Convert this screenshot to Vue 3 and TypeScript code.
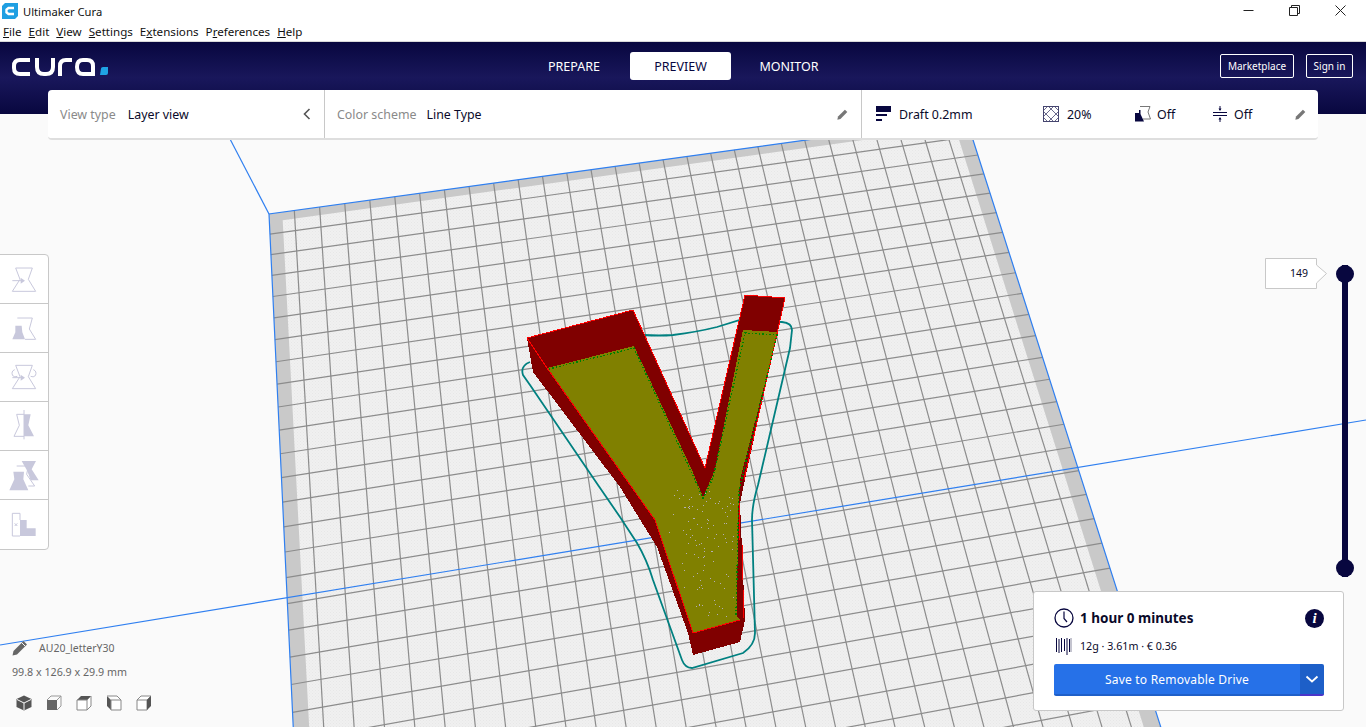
<template>
  <div class="app">
    <div class="titlebar">
      <svg class="app-icon" width="16" height="16" viewBox="0 0 16 16">
        <path d="M3 0H16V13L13 16H0V3Z" fill="#1f9fe2" />
        <path d="M12 5H6.500L4.500 6.500V9.500L6.500 11H12" fill="none" stroke="#fff" stroke-width="2.400" />
      </svg>
      <span class="title">Ultimaker Cura</span>
      <div class="win-controls">
        <svg width="11" height="11" viewBox="0 0 11 11"><path d="M0.500 5.500H10.500" stroke="#222" /></svg>
        <svg width="11" height="11" viewBox="0 0 11 11"><path d="M0.500 2.500H8.500V10.500H0.500ZM2.500 2.500V0.500H10.500V8.500H8.500" fill="none" stroke="#222" /></svg>
        <svg width="11" height="11" viewBox="0 0 11 11"><path d="M0.500 0.500L10.500 10.500M10.500 0.500L0.500 10.500" stroke="#222" /></svg>
      </div>
    </div>
    <div class="menubar">
      <span><u>F</u>ile</span>
      <span><u>E</u>dit</span>
      <span><u>V</u>iew</span>
      <span><u>S</u>ettings</span>
      <span>E<u>x</u>tensions</span>
      <span>P<u>r</u>eferences</span>
      <span><u>H</u>elp</span>
    </div>

    <header class="header">
      <svg class="logo" width="100" height="22" viewBox="0 0 100 22">
        <g fill="none" stroke="#fff" stroke-width="4">
          <path d="M19 4H9Q3 4 3 10V12Q3 18 9 18H19" />
          <path d="M26 2V11Q26 18 33 18H35Q42 18 42 11V2" />
          <path d="M49 20V10Q49 4 55 4H61" />
          <path d="M82 20V10Q82 4 76 4H72Q66 4 66 11Q66 18 72 18H82" />
        </g>
        <path d="M90 12.500Q90 11 92 11H97V17Q97 19 95 19H89Z" fill="#1fa3e4" />
      </svg>
      <nav class="tabs">
        <span class="tab">PREPARE</span>
        <span class="tab active">PREVIEW</span>
        <span class="tab monitor">MONITOR</span>
      </nav>
      <div class="account">
        <span class="outline-btn market">Marketplace</span>
        <span class="outline-btn signin">Sign in</span>
      </div>
    </header>

    <main class="viewport">
      <svg class="scene" width="1366" height="613" viewBox="0 114 1366 613">
        <defs>
          <pattern id="dots" width="3" height="3" patternUnits="userSpaceOnUse">
            <rect width="3" height="3" fill="#f0f0f0" />
            <rect width="1" height="1" fill="#e7e7e7" />
            <rect x="1.500" y="1.500" width="1" height="1" fill="#eaeaea" />
          </pattern>
        </defs>
        <polygon :points="bedOuter" fill="#c9c9c9" />
        <polygon :points="bedInner" fill="url(#dots)" />
        <line v-for="l in gridLines" :key="l.id" :x1="l.x1" :y1="l.y1" :x2="l.x2" :y2="l.y2" class="grid-line" />
        <path d="M230 139L269 214" class="axis" />
        <path d="M0 645L1366 420" class="axis" />
        <path :d="bedEdge" class="axis" />

        <!-- skirt -->
        <path
          d="M643 335Q660 336 673 335Q697 332 717 327L740 320L782 322Q792 323 792 330L790 348L758 485Q752 505 752 520L755 633Q755 645 743 653L692 668Q685 668 682 660L653 580Q647 560 637 543L620 517L598 485L530 385L523 375Q520 366 530 362"
          fill="none" stroke="#008080" stroke-width="1.800"
        />
        <!-- model -->
        <g shape-rendering="crispEdges">
          <polygon points="527,338 633,310 705,468 745,295 785,298 747,470 740,503 745,620 740,642 693,655 688,633 657,547 620,487 533,372" fill="#800000" />
          <polygon points="547,368 634,346 692,470 703,497 715,470 743,330 778,332 740,480 738,513 737,617 740,620 693,633 655,520" fill="#808000" />
          <path d="M527 338L633 310L705 468M705 468L745 295L785 298L744 480" fill="none" stroke="#f00" />
          <path d="M527 338L547 368L655 520L693 633L740 620" fill="none" stroke="#f00" />
          <path d="M739 503V540M742 545V580M743 590V618" fill="none" stroke="#f00" />
          <path d="M549 369L634 348L694 478L703 498L713 478L745 333L777 335L739 490L736 616" fill="none" stroke="#008000" stroke-width="1.400" stroke-dasharray="1.500 2" />
          <rect v-for="d in infillDots" :key="d.id" :x="d.x" :y="d.y" width="1" height="1" fill="#b4aeb4" />
        </g>
      </svg>

      <!-- tools -->
      <aside class="toolbar">
        <button v-for="t in toolIcons" :key="t.id" class="tool">
          <svg width="47" height="49" viewBox="0 0 141 147" class="tool-svg">
            <path v-for="(d, i) in t.outline" :key="'o' + i" :d="d" fill="none" stroke="#c8c8dc" stroke-width="3" />
            <path v-for="(d, i) in t.solid" :key="'s' + i" :d="d" fill="#c8c8dc" />
          </svg>
        </button>
      </aside>

      <!-- object info -->
      <div class="object-info">
        <div class="object-name">
          <svg width="16" height="16" viewBox="0 0 16 16"><path d="M0.500 15.500L1.500 11L11.500 1L15 4.500L5 14.500Z" fill="#666" /><path d="M10 3L13 6" stroke="#fafafa" /></svg>
          <span>AU20_letterY30</span>
        </div>
        <div class="object-size">99.8 x 126.9 x 29.9 mm</div>
        <div class="view-icons">
          <svg width="16" height="16" viewBox="0 0 16 16">
            <path d="M8 0.500L15.500 4V12L8 15.500L0.500 12V4Z" fill="#555" />
            <path d="M1 4.500L8 8L15 4.500M8 8V15" fill="none" stroke="#fafafa" />
          </svg>
          <svg width="16" height="16" viewBox="0 0 16 16">
            <path d="M1 5H11V15H1Z" fill="#666" />
            <path d="M1 5L5 1H15V11L11 15M11 5L15 1" fill="none" stroke="#999" />
          </svg>
          <svg width="16" height="16" viewBox="0 0 16 16">
            <path d="M1 5L5 1H15L11 5Z" fill="#555" />
            <path d="M1 5H11V15H1ZM11 5L15 1V11L11 15" fill="#fff" stroke="#888" />
          </svg>
          <svg width="16" height="16" viewBox="0 0 16 16">
            <path d="M1 1L5 5V15L1 11Z" fill="#555" />
            <path d="M5 5H15V15H5ZM1 1H11L15 5" fill="#fff" stroke="#888" />
          </svg>
          <svg width="16" height="16" viewBox="0 0 16 16">
            <path d="M1 5H11V15H1ZM1 5L5 1H15L11 5" fill="#fff" stroke="#888" />
            <path d="M11 5L15 1V11L11 15Z" fill="#555" />
          </svg>
        </div>
      </div>

      <!-- layer slider -->
      <div class="layer-label">
        <svg class="label-box" width="63" height="31" viewBox="0 0 63 31">
          <path d="M0.500 0.500H51.500V7L61.500 15.500L51.500 25V30.500H0.500Z" fill="#fff" stroke="#c8c8c8" />
        </svg>
        <span>149</span>
      </div>
      <div class="layer-slider">
        <span class="knob" />
        <span class="knob" />
      </div>

      <!-- print estimate -->
      <section class="job-card">
        <div class="job-row">
          <svg width="20" height="20" viewBox="0 0 20 20">
            <circle cx="10" cy="10" r="9" fill="none" stroke="#08073f" stroke-width="1.300" />
            <path d="M10 3.500V10.500L13 14" fill="none" stroke="#08073f" stroke-width="1.200" />
          </svg>
          <strong class="job-time">1 hour 0 minutes</strong>
          <span class="info">i</span>
        </div>
        <div class="job-row material">
          <svg width="16" height="18" viewBox="0 0 16 18">
            <path d="M0.500 1V15M3 2V16M5.500 1V15M8.500 2V14M11 1V18M13.500 2V15" fill="none" stroke="#08073f" />
            <path d="M15 1V15" stroke="#8a8aa0" />
          </svg>
          <span>12g · 3.61m · € 0.36</span>
        </div>
        <div class="save-row">
          <span class="save-btn">Save to Removable Drive</span>
          <span class="save-more">
            <svg width="14" height="8" viewBox="0 0 14 8"><path d="M1.500 1.500L7 6.500L12.500 1.500" fill="none" stroke="#fff" stroke-width="1.800" /></svg>
          </span>
        </div>
      </section>
    </main>

    <!-- settings strip lies over header and viewport -->
    <div class="strip">
      <div class="strip-cell view-type">
        <span class="muted">View type</span>
        <span class="val first">Layer view</span>
        <svg class="push" width="8" height="12" viewBox="0 0 8 12"><path d="M6.500 1L1.500 6L6.500 11" fill="none" stroke="#555" stroke-width="1.600" /></svg>
      </div>
      <div class="strip-cell scheme">
        <span class="muted">Color scheme</span>
        <span class="val second">Line Type</span>
        <svg class="push" width="11" height="11" viewBox="0 0 16 16"><path d="M0.500 15.500L1.500 11L11.500 1L15 4.500L5 14.500Z" fill="#777" /></svg>
      </div>
      <div class="strip-cell profile">
        <svg class="ic" width="15" height="16" viewBox="0 0 15 16">
          <rect width="15" height="6" fill="#08073f" />
          <rect y="8" width="11" height="2" fill="#08073f" />
          <rect y="13" width="6" height="2" fill="#08073f" />
        </svg>
        <span class="val draft">Draft 0.2mm</span>
        <svg class="ic infill" width="16" height="16" viewBox="0 0 16 16">
          <rect x="0.500" y="0.500" width="15" height="15" fill="none" stroke="#45456f" />
          <path d="M0 5L5 0M0 11L11 0M5 16L16 5M11 16L16 11M0 5L11 16M0 11L5 16M5 0L16 11M11 0L16 5" fill="none" stroke="#45456f" stroke-width="0.800" />
        </svg>
        <span class="val pct">20%</span>
        <svg class="ic support" width="16" height="16" viewBox="0 0 16 16">
          <path d="M5 0.500H15L13 6L15.500 13H8" fill="none" stroke="#777" />
          <path d="M0 7H4V4H5.500V8L9 15.500H0Z" fill="#08073f" />
        </svg>
        <span class="val off1">Off</span>
        <svg class="ic adhesion" width="14" height="16" viewBox="0 0 14 16">
          <path d="M0 6.500H14M0 9.500H14" stroke="#08073f" />
          <path d="M7 0V4M7 12V16" stroke="#08073f" />
          <path d="M5.500 2.500H8.500L7 5ZM5.500 13.500H8.500L7 11Z" fill="#08073f" />
        </svg>
        <span class="val off2">Off</span>
        <svg class="push" width="11" height="11" viewBox="0 0 16 16"><path d="M0.500 15.500L1.500 11L11.500 1L15 4.500L5 14.500Z" fill="#777" /></svg>
      </div>
    </div>
  </div>
</template>

<script setup lang="ts">
import { computed } from 'vue'

type Pt = [number, number]

// bed corners on screen: the near corner sits behind the strip, the far edge runs off the window
const TL: Pt = [269, 214]
const TR: Pt = [966, 118]
const BR: Pt = [1179, 784]
const BL: Pt = [304, 955]
const COLS = 29
const ROWS = 29

function makeProjector() {
  const [x0, y0] = TL
  const [x1, y1] = TR
  const [x2, y2] = BR
  const [x3, y3] = BL
  const dx1 = x1 - x2
  const dx2 = x3 - x2
  const sx = x0 - x1 + x2 - x3
  const dy1 = y1 - y2
  const dy2 = y3 - y2
  const sy = y0 - y1 + y2 - y3
  const det = dx1 * dy2 - dx2 * dy1
  const g = (sx * dy2 - dx2 * sy) / det
  const h = (dx1 * sy - sx * dy1) / det
  const a = x1 - x0 + g * x1
  const b = x3 - x0 + h * x3
  const d = y1 - y0 + g * y1
  const e = y3 - y0 + h * y3
  return (u: number, v: number): Pt => {
    const w = g * u + h * v + 1
    return [(a * u + b * v + x0) / w, (d * u + e * v + y0) / w]
  }
}

const project = makeProjector()
const pts = (list: Pt[]) => list.map((p) => `${p[0].toFixed(1)},${p[1].toFixed(1)}`).join(' ')

const bedOuter = computed(() => pts([TL, TR, BR, BL]))
const bedInner = computed(() =>
  pts([project(0.018, 0.014), project(0.98, 0.014), project(0.98, 1), project(0.018, 1)])
)
const bedEdge = computed(() => `M${BL[0]} ${BL[1]}L${TL[0]} ${TL[1]}L${TR[0]} ${TR[1]}L${BR[0]} ${BR[1]}`)

const gridLines = computed(() => {
  const out: { id: string; x1: number; y1: number; x2: number; y2: number }[] = []
  for (let i = 1; i < COLS; i++) {
    const a = project(i / COLS, 0)
    const b = project(i / COLS, 1)
    out.push({ id: `c${i}`, x1: a[0], y1: a[1], x2: b[0], y2: b[1] })
  }
  for (let j = 1; j < ROWS; j++) {
    const a = project(0, j / ROWS)
    const b = project(1, j / ROWS)
    out.push({ id: `r${j}`, x1: a[0], y1: a[1], x2: b[0], y2: b[1] })
  }
  return out
})

// the little pale specks where the infill of the stem has gaps
const infillDots = computed(() => {
  const out: { id: number; x: number; y: number }[] = []
  const rand = (n: number) => {
    const v = Math.sin(n * 12.9898) * 43758.5453
    return v - Math.floor(v)
  }
  for (let k = 0; k < 110; k++) {
    const t = rand(k + 1)
    const y = Math.round(490 + t * t * 0.3 * 127 + t * 0.7 * 127)
    const left = y > 520 ? 662 + (y - 520) * 0.31 : 672
    const x = Math.round(left + rand(k + 200) * (734 - left))
    out.push({ id: k, x, y })
  }
  return out
})

const toolIcons = [
  {
    id: 'move',
    outline: ['M47 39H97L85 73L107 109H37L60 73Z', 'M37 77H65'],
    solid: ['M62 68L75 77L62 86Z'],
  },
  {
    id: 'scale',
    outline: ['M52 42H97L88 75L107 106H75'],
    solid: ['M46 65H65L67 85L75 106H37L46 85Z'],
  },
  {
    id: 'rotate',
    outline: ['M47 37H97L85 71L107 107H37L60 71Z', 'M44 50Q32 55 38 68Q44 74 52 70', 'M100 50Q112 55 106 68Q100 74 92 70', 'M37 74H65'],
    solid: ['M62 65L75 74L62 83Z'],
  },
  {
    id: 'mirror',
    outline: ['M72 37H50L58 70L42 103H72', 'M72 24V112'],
    solid: ['M72 37H92L85 70L102 103H72Z'],
  },
  {
    id: 'per-model',
    outline: ['M50 45H85L80 70L104 105H85'],
    solid: ['M40 62H72L70 85L85 118H28L43 85Z', 'M65 30H108L95 55L116 88H92L82 60Z'],
  },
  {
    id: 'blocker',
    outline: ['M60 108H37V40H60V60', 'M44 70L52 78M52 70L44 78'],
    solid: ['M60 60H80V85H107V108H60Z'],
  },
]
</script>

<style>
html,
body {
  margin: 0;
  background: #fafafa;
}
</style>

<style scoped>
.app {
  position: relative;
  width: 1366px;
  height: 727px;
  overflow: hidden;
  display: flex;
  flex-direction: column;
  background: #fafafa;
  font-family: "Noto Sans", "Open Sans", sans-serif;
  font-size: 12px;
  color: #0a0a2a;
}

.titlebar {
  height: 22px;
  display: flex;
  align-items: center;
  background: #fff;
  padding-left: 2px;
}

.app-icon {
  margin-right: 5px;
}

.title {
  font-size: 11.200px;
  color: #111;
}

.win-controls {
  margin-left: auto;
  display: flex;
  gap: 35px;
  padding-right: 20px;
  margin-top: -2px;
}

.menubar {
  height: 19px;
  display: flex;
  gap: 7px;
  align-items: center;
  padding-left: 3px;
  background: #fff;
  border-bottom: 1px solid #d9d9d9;
  font-size: 11.600px;
  color: #111;
}

.header {
  position: relative;
  height: 72px;
  flex: none;
  display: flex;
  background: linear-gradient(#08073f, #19175b 50%, #08073f);
  color: #fff;
}

.logo {
  position: absolute;
  left: 11px;
  top: 14px;
}

.tabs {
  display: flex;
  height: 28px;
  margin: 10px 0 0 518px;
}

.tab {
  display: flex;
  align-items: center;
  justify-content: center;
  width: 112px;
  height: 28px;
  font-size: 12.500px;
}

.tab.active {
  width: 101px;
  background: #fff;
  color: #08073f;
  border-radius: 3px;
}

.tab.monitor {
  width: 116px;
}

.account {
  position: absolute;
  right: 13px;
  top: 12px;
  display: flex;
  gap: 12px;
}

.outline-btn {
  display: flex;
  align-items: center;
  justify-content: center;
  box-sizing: border-box;
  height: 24px;
  border: 1px solid #fff;
  border-radius: 2px;
  font-size: 10px;
}

.market {
  width: 74px;
}

.signin {
  width: 47px;
}

.viewport {
  position: relative;
  flex: 1;
}

.scene {
  position: absolute;
  left: 0;
  top: 0;
  display: block;
}

.grid-line {
  stroke: #8c8c8c;
  stroke-width: 1.200;
}

.axis {
  fill: none;
  stroke: #2f7ff0;
  stroke-width: 1.200;
}

.strip {
  position: absolute;
  left: 48px;
  top: 90px;
  width: 1270px;
  height: 48px;
  display: flex;
  background: #fff;
  border-radius: 4px;
  border-bottom: 2px solid #dedede;
}

.strip-cell {
  display: flex;
  align-items: center;
  height: 48px;
  font-size: 12.400px;
}

.view-type {
  width: 277px;
  padding-left: 12px;
  box-sizing: border-box;
  border-right: 1px solid #c8c8c8;
}

.scheme {
  width: 537px;
  padding-left: 12px;
  box-sizing: border-box;
  border-right: 1px solid #c8c8c8;
}

.profile {
  flex: 1;
  padding-left: 14px;
}

.muted {
  color: #8a8a8a;
}

.val {
  color: #0a0a2a;
}

.first {
  margin-left: 12px;
}

.second {
  margin-left: 10px;
}

.push {
  margin-left: auto;
  margin-right: 13px;
}

.profile .push {
  margin-right: 12px;
}

.ic {
  flex: none;
}

.draft {
  margin-left: 8px;
  width: 144px;
}

.pct {
  margin-left: 8px;
  width: 68px;
}

.off1 {
  margin-left: 6px;
  width: 56px;
}

.off2 {
  margin-left: 7px;
}

.toolbar {
  position: absolute;
  left: -1px;
  top: 140px;
  width: 48px;
  display: flex;
  flex-direction: column;
  background: #fff;
  border: 1px solid #c8c8c8;
  border-radius: 0 4px 4px 0;
}

.tool {
  width: 48px;
  height: 49px;
  padding: 0;
  border: 0;
  background: transparent;
  border-bottom: 1px solid #c8c8c8;
  box-sizing: border-box;
}

.tool:last-child {
  border-bottom: 0;
}

.tool-svg {
  display: block;
}

.object-info {
  position: absolute;
  left: 12px;
  top: 526px;
  color: #666;
  font-size: 10.700px;
}

.object-name {
  display: flex;
  align-items: center;
  gap: 11px;
  height: 16px;
  font-size: 10.500px;
}

.object-size {
  margin-top: 8px;
  height: 16px;
  line-height: 16px;
}

.view-icons {
  display: flex;
  gap: 14px;
  margin-top: 15px;
  padding-left: 4px;
}

.layer-label {
  position: absolute;
  left: 1265px;
  top: 144px;
  width: 63px;
  height: 31px;
  line-height: 31px;
  font-size: 10.500px;
}

.label-box {
  position: absolute;
  left: 0;
  top: 0;
}

.layer-label span {
  position: relative;
  margin-left: 25px;
}

.layer-slider {
  position: absolute;
  left: 1336px;
  top: 151px;
  width: 18px;
  height: 312px;
  display: flex;
  flex-direction: column;
  justify-content: space-between;
  align-items: center;
  background: linear-gradient(#08073f, #08073f) center / 6px 100% no-repeat;
}

.knob {
  width: 18px;
  height: 18px;
  border-radius: 50%;
  background: #08073f;
}

.job-card {
  position: absolute;
  left: 1033px;
  top: 477px;
  box-sizing: border-box;
  width: 311px;
  height: 120px;
  padding: 16px 19px 0 20px;
  background: #fff;
  border: 1px solid #c8c8c8;
  border-radius: 3px;
}

.job-row {
  display: flex;
  align-items: center;
  height: 20px;
}

.job-time {
  margin-left: 6px;
  font-size: 13.500px;
  font-weight: 700;
  color: #0a0a2a;
}

.info {
  margin-left: auto;
  width: 19px;
  height: 19px;
  border-radius: 50%;
  background: #08073f;
  color: #fff;
  font: italic 700 15px/19px "Liberation Serif", serif;
  text-align: center;
}

.material {
  margin-top: 8px;
  font-size: 10.700px;
  padding-left: 2px;
}

.material span {
  margin-left: 8px;
}

.save-row {
  display: flex;
  height: 32px;
  margin-top: 8px;
  color: #fff;
}

.save-btn {
  flex: 1;
  display: flex;
  align-items: center;
  justify-content: center;
  background: #2671e8;
  border-bottom: 2px solid #1f5fc8;
  border-radius: 2px 0 0 2px;
  font-size: 12px;
  letter-spacing: 0.200px;
}

.save-more {
  width: 24px;
  display: flex;
  align-items: center;
  justify-content: center;
  background: #1d5fc8;
  border-bottom: 2px solid #4a35c8;
  border-radius: 0 2px 2px 0;
}
</style>
